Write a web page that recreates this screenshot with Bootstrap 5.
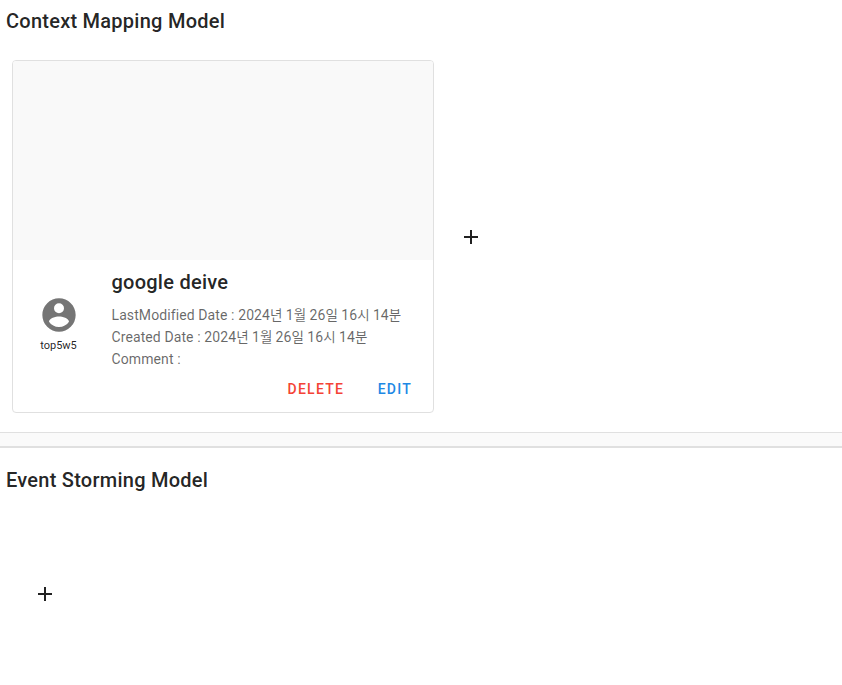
<!DOCTYPE html>
<html lang="ko">
<head>
<meta charset="utf-8">
<title>Models</title>
<link href="https://cdn.jsdelivr.net/npm/bootstrap@5.3.0/dist/css/bootstrap.min.css" rel="stylesheet">
<style>
body{font-family:Roboto,"Noto Sans CJK KR",sans-serif;color:rgba(0,0,0,.87);height:685px;overflow:hidden}
.heading{font-size:20px;line-height:32px;font-weight:500;letter-spacing:.25px;padding:5px 6px 0;margin:0}
.model-card{width:422px;height:353px;border:1px solid #e0e0e0;border-radius:4px;margin:23px 0 0 12px;overflow:hidden}
.preview{height:199px;background:#f9f9f9}
.who{width:91px;padding-top:35px;font-size:11px;line-height:18px;letter-spacing:0;color:rgba(0,0,0,.87)}
.who span{margin-top:2px}
.info{padding:6px 0 0 7.5px;font-size:14px;line-height:22px;letter-spacing:.1px;color:rgba(0,0,0,.6)}
.info i{font-style:normal;font-size:13.5px;line-height:1;letter-spacing:-.25px}
.info h3{font-size:20px;line-height:32px;font-weight:500;letter-spacing:.25px;margin:0 0 6px;color:rgba(0,0,0,.87)}
.actions{padding:1px 13px 0 0;height:36px;gap:17.5px}
.text-action{font-size:14px;font-weight:500;letter-spacing:1.25px;line-height:20px;padding:0 8px;border:0;background:none}
.del{color:#f44336}.edit{color:#1e88e5}
.divider-bar{height:16px;margin-top:19px;background:#fafafa;border-top:1px solid #e0e0e0;border-bottom:2px solid #e0e0e0}
.add{border:0;background:none;padding:0;width:24px;height:24px}
.add-next{margin:24px 0 0 25px}
.add-first{margin:86px 0 0 33px}
.storming{padding-top:11px}
</style>
<script src="https://cdn.jsdelivr.net/npm/bootstrap@5.3.0/dist/js/bootstrap.bundle.min.js"></script>
</head>
<body>
<section>
<h2 class="heading">Context Mapping Model</h2>
<div class="d-flex align-items-center">
<article class="model-card d-flex flex-column">
<div class="preview"></div>
<div class="d-flex">
<div class="who d-flex flex-column align-items-center"><svg width="40" height="40" viewBox="0 0 24 24" fill="#757575"><path d="M12,19.2C9.5,19.2 7.29,17.92 6,16C6.03,14 10,12.9 12,12.9C14,12.9 17.97,14 18,16C16.71,17.92 14.5,19.2 12,19.2M12,5A3,3 0 0,1 15,8A3,3 0 0,1 12,11A3,3 0 0,1 9,8A3,3 0 0,1 12,5M12,2A10,10 0 0,0 2,12A10,10 0 0,0 12,22A10,10 0 0,0 22,12C22,6.47 17.5,2 12,2Z"/></svg><span>top5w5</span></div>
<div class="info"><h3>google deive</h3><div>LastModified Date : 2024<i>년</i> 1<i>월</i> 26<i>일</i> 16<i>시</i> 14<i>분</i></div><div>Created Date : 2024<i>년</i> 1<i>월</i> 26<i>일</i> 16<i>시</i> 14<i>분</i></div><div>Comment :</div></div>
</div>
<div class="actions d-flex justify-content-end align-items-center"><button class="text-action del">DELETE</button><button class="text-action edit">EDIT</button></div>
</article>
<button class="add add-next d-flex" aria-label="Add"><svg width="24" height="24" viewBox="0 0 24 24" fill="#212121"><path d="M19,13H13V19H11V13H5V11H11V5H13V11H19V13Z"/></svg></button>
</div>
</section>
<div class="divider-bar"></div>
<section class="storming">
<h2 class="heading">Event Storming Model</h2>
<button class="add add-first d-flex" aria-label="Add"><svg width="24" height="24" viewBox="0 0 24 24" fill="#212121"><path d="M19,13H13V19H11V13H5V11H11V5H13V11H19V13Z"/></svg></button>
</section>
</body>
</html>
